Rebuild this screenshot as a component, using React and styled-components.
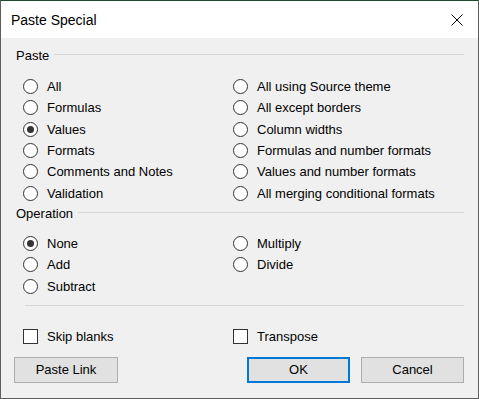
import React from 'react';
import styled, { createGlobalStyle } from 'styled-components';

const GlobalStyle = createGlobalStyle`
  html, body {
    margin: 0;
    padding: 0;
    background: #f0f0f0;
  }
  body {
    font-family: "Liberation Sans", Arial, sans-serif;
    font-size: 13px;
    color: #000;
  }
`;

const pasteLeft = ['All', 'Formulas', 'Values', 'Formats', 'Comments and Notes', 'Validation'];
const pasteRight = [
  'All using Source theme',
  'All except borders',
  'Column widths',
  'Formulas and number formats',
  'Values and number formats',
  'All merging conditional formats',
];
const opLeft = ['None', 'Add', 'Subtract'];
const opRight = ['Multiply', 'Divide'];

const Window = styled.div`
  box-sizing: border-box;
  width: 479px;
  height: 399px;
  display: flex;
  flex-direction: column;
  border: 1px solid #5e5e5e;
  border-top-color: #1f4b33;
  background: #f0f0f0;
`;

const TitleBar = styled.div`
  height: 37px;
  flex: none;
  display: flex;
  align-items: center;
  justify-content: space-between;
  background: #fff;
  padding: 0 15px 0 10px;
  font-size: 14px;
`;

const Body = styled.div`
  flex: 1;
  display: flex;
  flex-direction: column;
  padding: 7px 14px 0 13px;
`;

const GroupHeader = styled.div`
  display: flex;
  align-items: center;
  gap: 5px;
  height: ${(p) => p.$h}px;
  margin-left: 2px;
  margin-bottom: ${(p) => p.$mb}px;
  &::after {
    content: '';
    flex: 1;
    height: 1px;
    background: #d6d6d6;
    margin-top: -1px;
  }
`;

const OptionGrid = styled.div`
  display: grid;
  grid-template-columns: 210px 1fr;
  grid-auto-flow: column;
  grid-template-rows: repeat(${(p) => p.$rows}, 21.3px);
  margin-left: 9px;
`;

const Option = styled.label`
  display: flex;
  align-items: center;
  gap: 9px;
  white-space: nowrap;
`;

const Radio = styled.span`
  box-sizing: border-box;
  width: 15px;
  height: 15px;
  border-radius: 50%;
  border: 1px solid #333;
  background: #fff;
  display: flex;
  align-items: center;
  justify-content: center;
  &::after {
    content: '';
    width: 7px;
    height: 7px;
    border-radius: 50%;
    background: ${(p) => (p.$checked ? '#333' : 'transparent')};
  }
`;

const Check = styled.span`
  box-sizing: border-box;
  width: 15px;
  height: 15px;
  border: 1px solid #333;
  background: #fff;
`;

const Separator = styled.div`
  height: 1px;
  background: #d6d6d6;
  margin: 8px 0 0 11px;
`;

const CheckRow = styled.div`
  display: grid;
  grid-template-columns: 210px 1fr;
  height: 21px;
  margin: 20px 0 0 9px;
`;

const ButtonRow = styled.div`
  display: flex;
  gap: 11px;
  margin-top: 10px;
`;

const Button = styled.button`
  box-sizing: border-box;
  width: 104px;
  height: 26px;
  font-family: inherit;
  font-size: 13px;
  color: #000;
  background: #e1e1e1;
  border: ${(p) => (p.$default ? '2px solid #0078d7' : '1px solid #adadad')};
  padding: 0;
  &:first-child {
    margin-right: auto;
  }
  &:not(:first-child) {
    width: 103px;
  }
`;

const CloseIcon = () => (
  <svg width="12" height="12" viewBox="0 0 12 12">
    <path d="M0.5 0.5 L11.5 11.5 M11.5 0.5 L0.5 11.5" stroke="#000" strokeWidth="1" fill="none" />
  </svg>
);

const RadioGroup = ({ left, right, checked }) => (
  <OptionGrid $rows={left.length}>
    {[...left, ...right.concat(Array(left.length - right.length).fill(null))].map((label, i) =>
      label ? (
        <Option key={i}>
          <Radio $checked={label === checked} />
          {label}
        </Option>
      ) : (
        <span key={i} />
      )
    )}
  </OptionGrid>
);

export default function App() {
  return (
    <>
      <GlobalStyle />
      <Window>
        <TitleBar>
          <span>Paste Special</span>
          <CloseIcon />
        </TitleBar>
        <Body>
          <GroupHeader $h={20} $mb={11}>Paste</GroupHeader>
          <RadioGroup left={pasteLeft} right={pasteRight} checked="Values" />
          <GroupHeader $h={19} $mb={10}>Operation</GroupHeader>
          <RadioGroup left={opLeft} right={opRight} checked="None" />
          <Separator />
          <CheckRow>
            <Option>
              <Check />
              Skip blanks
            </Option>
            <Option>
              <Check />
              Transpose
            </Option>
          </CheckRow>
          <ButtonRow>
            <Button>Paste Link</Button>
            <Button $default>OK</Button>
            <Button>Cancel</Button>
          </ButtonRow>
        </Body>
      </Window>
    </>
  );
}
